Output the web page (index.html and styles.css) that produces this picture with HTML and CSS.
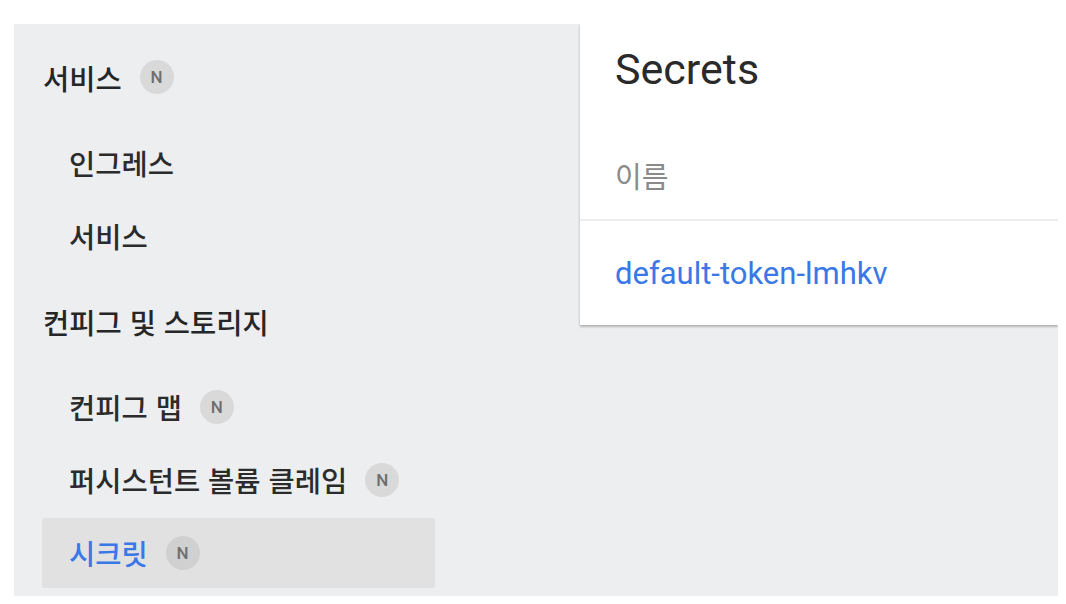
FILE: index.html
```html
<!DOCTYPE html>
<html lang="ko">
<head>
<meta charset="utf-8">
<link rel="stylesheet" href="styles.css">
</head>
<body>
<div class="frame">
  <nav class="sidebar">
    <div class="nav-heading">서비스 <span class="badge">N</span></div>
    <div class="nav-item">인그레스</div>
    <div class="nav-item">서비스</div>
    <div class="nav-heading">컨피그 및 스토리지</div>
    <div class="nav-item">컨피그 맵 <span class="badge">N</span></div>
    <div class="nav-item">퍼시스턴트 볼륨 클레임 <span class="badge">N</span></div>
    <div class="nav-item selected">시크릿 <span class="badge">N</span></div>
  </nav>
  <main class="content">
    <section class="card">
      <h1 class="card-title">Secrets</h1>
      <div class="table-head">이름</div>
      <div class="table-row"><a class="link" href="#">default-token-lmhkv</a></div>
    </section>
  </main>
</div>
</body>
</html>
```

FILE: styles.css
```css
html, body {
  margin: 0;
  padding: 0;
  background: #ffffff;
}
body {
  font-family: Roboto, "Noto Sans CJK KR", sans-serif;
  color: #2b2b2b;
}
.frame {
  margin: 24px 0 0 14px;
  width: 1044px;
  height: 572px;
  background: #eceef0;
  display: flex;
  overflow: hidden;
}
.sidebar {
  width: 566px;
  flex: none;
  padding-top: 4px;
  box-sizing: border-box;
  display: flex;
  flex-direction: column;
}
.nav-heading {
  height: 98px;
  flex: none;
  display: flex;
  align-items: center;
  padding-left: 29px;
  font-family: "Noto Sans CJK KR", sans-serif;
  font-size: 28.5px;
  font-weight: 500;
  color: #262626;
  white-space: pre;
}
.nav-item {
  height: 70px;
  flex: none;
  margin: 1.5px 0 1.5px 28px;
  width: 393px;
  box-sizing: border-box;
  padding-left: 27px;
  display: flex;
  align-items: center;
  font-family: "Noto Sans CJK KR", sans-serif;
  font-size: 28.5px;
  font-weight: 500;
  color: #2b2b2b;
  border-radius: 3px;
  white-space: pre;
}
.nav-item.selected {
  background: #e1e1e2;
  color: #3a78e7;
}
.badge {
  display: inline-flex;
  align-items: center;
  justify-content: center;
  width: 34px;
  height: 34px;
  border-radius: 50%;
  background: #d9d9da;
  color: #6e6e6e;
  font-family: Roboto, sans-serif;
  font-size: 17px;
  font-weight: 500;
  margin-left: 10px;
}
.selected .badge {
  background: #d0d0d1;
}
.content {
  flex: 1;
}
.card {
  background: #ffffff;
  height: 301px;
  box-shadow: 0 2px 2px rgba(0,0,0,0.18), 0 1px 3px rgba(0,0,0,0.12);
  padding-top: 20px;
  box-sizing: border-box;
}
.card-title {
  margin: 0;
  padding-left: 35px;
  font-family: Roboto, sans-serif;
  font-size: 43px;
  font-weight: 400;
  line-height: 50px;
  color: #2a2a2a;
}
.table-head {
  padding: 66px 0 29px 35px;
  line-height: 30px;
  font-family: "Noto Sans CJK KR", sans-serif;
  font-size: 29px;
  color: #8a8a8a;
  border-bottom: 2px solid #ececec;
}
.table-row {
  padding: 36px 0 34px 35px;
  line-height: 34px;
}
.link {
  font-family: Roboto, sans-serif;
  font-size: 31px;
  color: #3a78e7;
  text-decoration: none;
}
```
